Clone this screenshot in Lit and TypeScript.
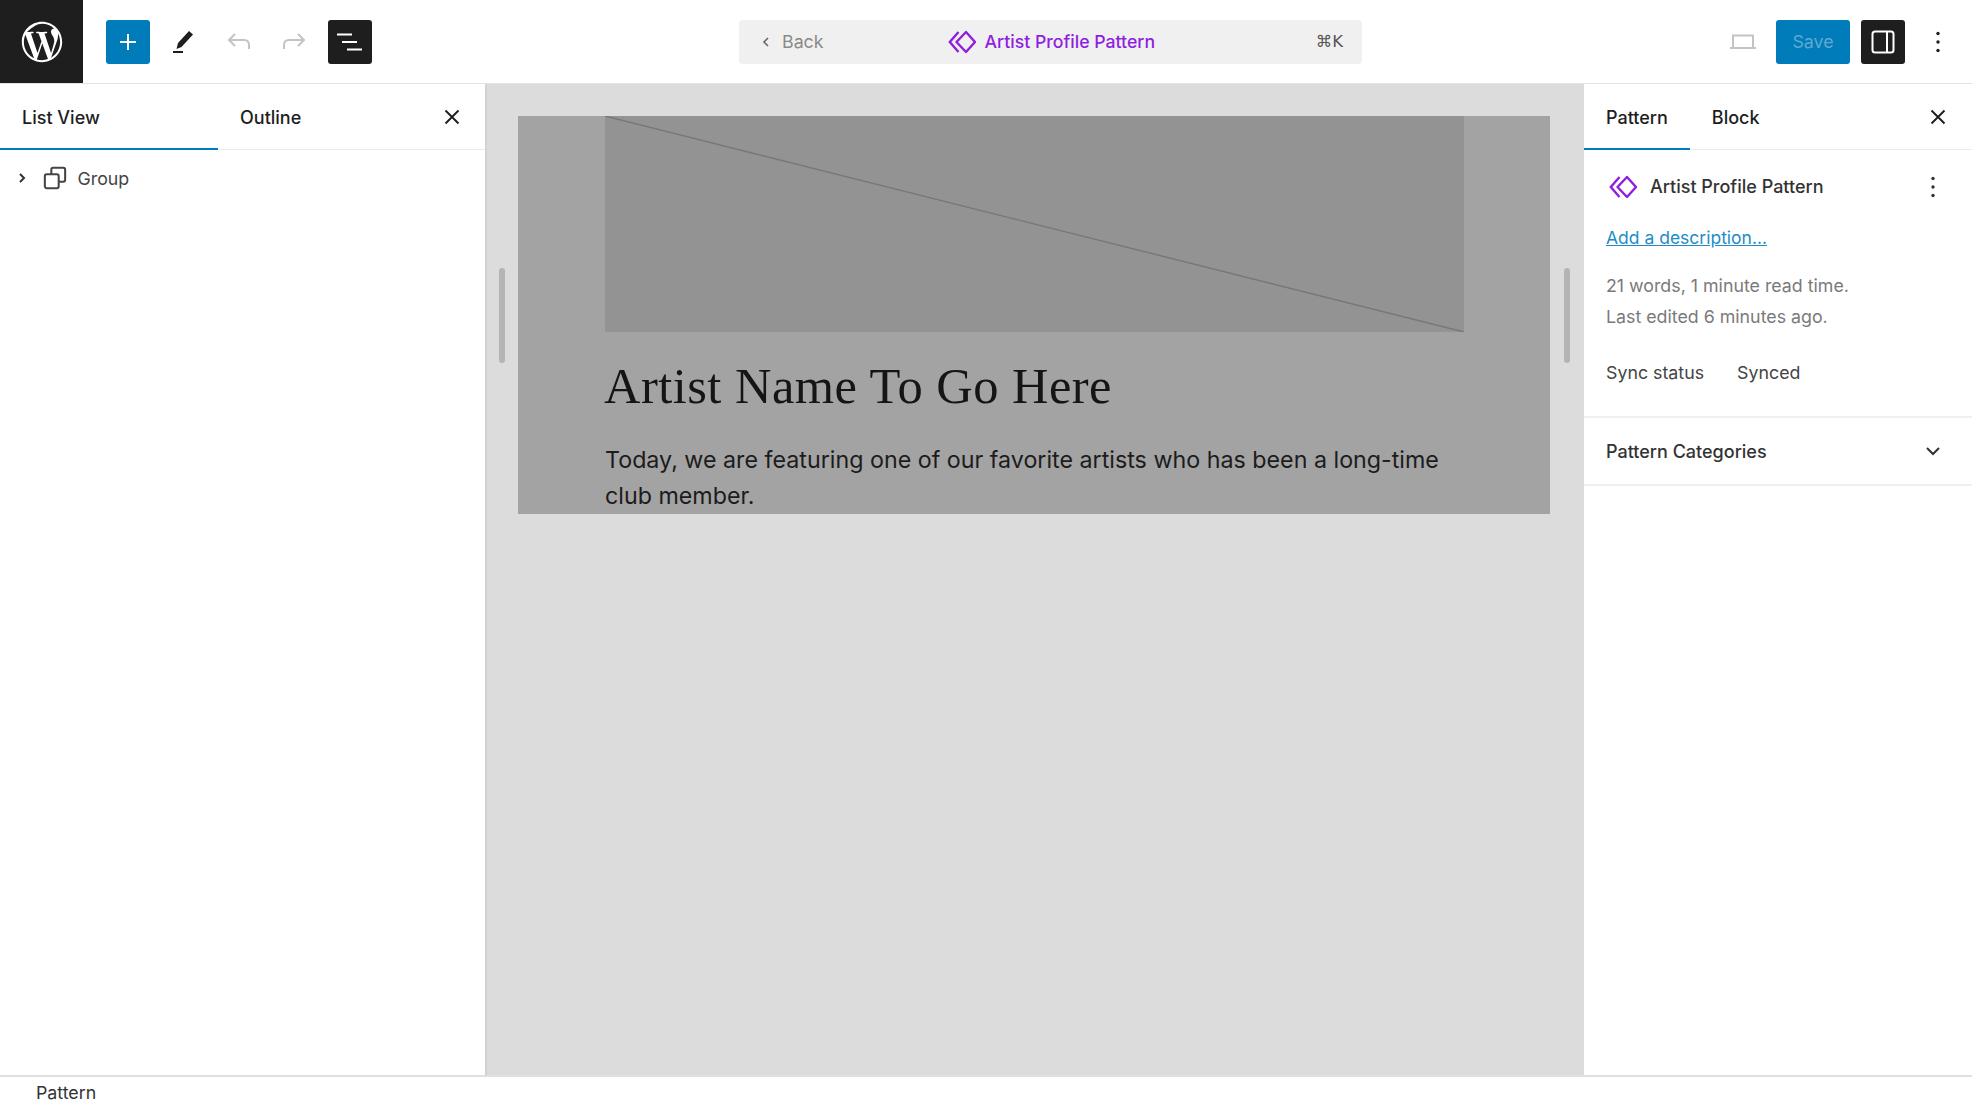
import { LitElement, html, css } from "lit";
import { customElement } from "lit/decorators.js";

const patternIcon = (size: number, color: string) => html`<svg class="pi" width=${size} height=${size} viewBox="0 0 28 28" fill="none" stroke=${color} stroke-width="2.4">
  <path d="M18 4 L8.5 14 L18 24 L27 14 Z" stroke-linejoin="round"/>
  <path d="M10.5 4 L1.8 14 L10.5 24"/>
</svg>`;

const dots = html`<svg width="24" height="24" viewBox="0 0 24 24" fill="currentColor"><circle cx="12" cy="3.5" r="1.7"/><circle cx="12" cy="12" r="1.7"/><circle cx="12" cy="20.5" r="1.7"/></svg>`;
const close = html`<svg width="18" height="18" viewBox="0 0 18 18" fill="none" stroke="currentColor" stroke-width="1.9"><path d="M2.5 2.5 L15.5 15.5 M15.5 2.5 L2.5 15.5"/></svg>`;

@customElement("app-root")
export class AppRoot extends LitElement {
  static styles = css`
    :host { display: block; width: 1972px; height: 1110px; overflow: hidden; background: #fff; font-family: Inter, "Liberation Sans", sans-serif; font-size: 17.8px; color: #1e1e1e; }
    * { box-sizing: border-box; }
    .app { display: grid; grid-template-rows: 84px 1fr 35px; height: 1110px; }
    .top { display: flex; align-items: center; border-bottom: 1px solid #e4e4e4; position: relative; }
    .logo { width: 83px; height: 83px; background: #1e1e1e; display: flex; align-items: center; justify-content: center; flex: none; }
    .tools { display: flex; align-items: center; gap: 11.5px; margin-left: 22.5px; width: 633px; flex: none; }
    .btn { width: 44px; height: 44px; display: flex; align-items: center; justify-content: center; border-radius: 3px; flex: none; color: #1e1e1e; }
    .btn.dark { background: #1e1e1e; color: #fff; }
    .btn.blue { background: #007cba; color: #fff; }
    .muted { color: #c4c4c4; }
    .cmd { width: 623.5px; height: 44px; background: #f0f0f0; border-radius: 4px; display: flex; align-items: center; padding: 0 19px 0 22.5px; flex: none; position: relative; }
    .back { display: flex; align-items: center; color: #8a8a8a; gap: 11px; font-size: 17.8px; }
    .title { position: absolute; left: 209px; top: 0; height: 44px; display: flex; align-items: center; gap: 9px; color: #8f1ee0; font-weight: 500; font-size: 17.7px; }
    .kbd { margin-left: auto; color: #555; font-weight: 500; font-family: "DejaVu Sans", Inter, sans-serif; font-size: 16.5px; }
    .actions { margin-left: auto; display: flex; align-items: center; padding-right: 12px; }
    .save { width: 74px; height: 44px; background: #007cba; color: #5fa8d3; border-radius: 3px; display: flex; align-items: center; justify-content: center; margin-left: 11px; margin-right: 11px; }
    .main { display: grid; grid-template-columns: 487px 1fr 388px; min-height: 0; }
    .left { border-right: 2px solid #d2d2d2; }
    .tabs { display: flex; height: 66px; border-bottom: 1px solid #eaeaea; position: relative; align-items: stretch; }
    .tab { display: flex; align-items: center; font-weight: 500; color: #1e1e1e; border-bottom: 2px solid transparent; margin-bottom: -1px; padding-top: 2px; font-size: 18px; }
    .tab.on { border-bottom-color: #007cba; }
    .left .tab { width: 218px; padding-left: 22px; }
    .left .tab.out { padding-left: 22px; width: auto; }
    .closer { margin-left: auto; display: flex; align-items: center; margin-right: 24px; }
    .tree { display: flex; align-items: center; height: 56px; padding-left: 16px; color: #444; }
    .tree .label { margin-left: 10.5px; }
    .tree .g { margin-left: 15px; display: flex; }
    .canvas { background: #dcdcdc; padding: 32px 34px 0 31px; position: relative; }
    .handle { position: absolute; top: 184px; width: 6px; height: 95px; border-radius: 3px; background: #b4b4b4; }
    .handle.l { left: 12px; }
    .handle.r { right: 14px; }
    .pattern { height: 398px; background: #a3a3a3; padding: 0 86px 0 87px; overflow: hidden; }
    .img { width: 859px; height: 216px; background: #939393; display: block; }
    h1 { margin: 24px 0 0 -1px; font: 400 50.5px/60px "Liberation Serif", serif; color: #151515; letter-spacing: 0.47px; }
    p.body { margin: 26px 0 0; font-size: 23.25px; line-height: 36px; color: #1c1c1c; width: 859px; }
    .right { border-left: 2px solid #d2d2d2; margin-left: -2px; }
    .right .tab { padding: 2px 22px 0; }
    .right .closer { margin-right: 25px; }
    .sec { padding: 0 22px; border-bottom: 2px solid #f0f0f0; height: 268px; }
    .head { display: flex; align-items: center; height: 75px; padding-bottom: 2px; font-weight: 500; color: #333; font-size: 18px; }
    .head .pi { margin-left: 2.5px; }
    .head .name { margin-left: 13.5px; }
    .head .more { margin-left: auto; margin-right: 5px; display: flex; color: #333; }
    .link { color: #1e8cc6; text-decoration: underline; display: block; line-height: 24px; margin-top: 1px; font-size: 17.5px; }
    .meta { color: #7a7a7a; line-height: 31px; margin-top: 20px; }
    .sync { display: flex; gap: 33px; margin-top: 29px; color: #444; line-height: 24px; }
    .acc { display: flex; align-items: center; justify-content: space-between; height: 68px; padding: 0 30px 0 22px; border-bottom: 2px solid #f0f0f0; font-weight: 500; color: #333; font-size: 18px; }
    .foot { border-top: 2px solid #e0e0e0; padding: 0 36px 2px; display: flex; align-items: center; color: #333; }
  `;

  render() {
    return html`<div class="app">
      <header class="top">
        <div class="logo">
          <svg width="44" height="44" viewBox="0 0 24 24" fill="#fff"><path d="M12 1C5.93 1 1 5.93 1 12s4.93 11 11 11 11-4.93 11-11S18.07 1 12 1zM2.11 12c0-1.43.31-2.79.85-4.02l4.72 12.93C4.37 19.31 2.11 15.92 2.11 12zM12 21.89c-.97 0-1.91-.14-2.8-.4l2.97-8.63 3.04 8.34c.02.05.05.09.07.14-1.02.36-2.12.55-3.28.55zm1.36-14.53c.6-.03 1.13-.1 1.13-.1.53-.06.47-.85-.06-.82 0 0-1.6.13-2.63.13-.97 0-2.6-.13-2.6-.13-.53-.03-.6.79-.06.82 0 0 .5.06 1.03.1l1.53 4.2-2.15 6.45-3.58-10.65c.6-.03 1.13-.1 1.13-.1.53-.06.47-.85-.06-.82 0 0-1.6.13-2.63.13-.19 0-.41 0-.64-.01C6.94 3.89 9.3 2.11 12 2.11c2.58 0 4.93.99 6.69 2.6-.04 0-.09-.01-.13-.01-.97 0-1.66.85-1.66 1.76 0 .82.47 1.51.97 2.32.38.66.82 1.51.82 2.73 0 .85-.33 1.83-.75 3.2l-.99 3.3-3.59-10.65zm3.61 13.19l3.02-8.73c.56-1.41.75-2.53.75-3.53 0-.36-.02-.7-.07-1.01.77 1.41 1.21 3.03 1.21 4.75 0 3.64-1.97 6.83-4.91 8.52z"/></svg>
        </div>
        <div class="tools">
          <div class="btn blue"><svg width="24" height="24" viewBox="0 0 24 24" fill="none" stroke="#fff" stroke-width="2"><path d="M12 4 V20 M4 12 H20"/></svg></div>
          <div class="btn"><svg width="26" height="26" viewBox="0 0 26 26" fill="#1e1e1e"><path d="M19 2 L23 5.5 L11.5 18 L6.5 20 L8 14 Z"/><rect x="3" y="22" width="10" height="2"/></svg></div>
          <div class="btn muted"><svg width="26" height="24" viewBox="0 0 26 24" fill="none" stroke="currentColor" stroke-width="2"><path d="M9 4 L3 10 L9 16 M3 10 H18 Q23 10 23 15 V19"/></svg></div>
          <div class="btn muted"><svg width="26" height="24" viewBox="0 0 26 24" fill="none" stroke="currentColor" stroke-width="2"><path d="M17 4 L23 10 L17 16 M23 10 H8 Q3 10 3 15 V19"/></svg></div>
          <div class="btn dark"><svg width="28" height="24" viewBox="0 0 28 24" fill="#fff"><rect x="1" y="3.5" width="15" height="2"/><rect x="6" y="11" width="15" height="2"/><rect x="11" y="18.5" width="15" height="2"/></svg></div>
        </div>
        <div class="cmd">
          <span class="back"><svg width="10" height="14" viewBox="0 0 10 14" fill="none" stroke="#666" stroke-width="1.6"><path d="M7 3 L3 7 L7 11"/></svg><span>Back</span></span>
          <span class="title">${patternIcon(28, "#8f1ee0")}Artist Profile Pattern</span>
          <span class="kbd">⌘K</span>
        </div>
        <div class="actions">
          <div class="btn muted"><svg width="30" height="24" viewBox="0 0 30 24" fill="none" stroke="#c4c4c4" stroke-width="2"><path d="M5 17 V5.5 H25 V17"/><path d="M2 18 H28"/></svg></div>
          <div class="save">Save</div>
          <div class="btn dark"><svg width="26" height="26" viewBox="0 0 26 26" fill="none" stroke="#fff" stroke-width="2"><rect x="2.5" y="2.5" width="21" height="21" rx="2.5"/><path d="M17 3 V23"/></svg></div>
          <div class="btn" style="margin-left: 11px">${dots}</div>
        </div>
      </header>
      <div class="main">
        <aside class="left">
          <div class="tabs">
            <div class="tab on">List View</div>
            <div class="tab out">Outline</div>
            <div class="closer">${close}</div>
          </div>
          <div class="tree">
            <svg width="12" height="14" viewBox="0 0 12 14" fill="none" stroke="#333" stroke-width="2"><path d="M4 3 L8 7 L4 11"/></svg>
            <span class="g"><svg width="24" height="24" viewBox="0 0 26 26" fill="none" stroke="#444" stroke-width="2.2"><rect x="2" y="9" width="15" height="15" rx="2"/><path d="M9 9 V4 Q9 2 11 2 H22 Q24 2 24 4 V15 Q24 17 22 17 H17"/></svg></span>
            <span class="label">Group</span>
          </div>
        </aside>
        <main class="canvas">
          <div class="handle l"></div>
          <div class="pattern">
            <svg class="img" viewBox="0 0 859 216" preserveAspectRatio="none"><line x1="0" y1="0" x2="859" y2="216" stroke="#777" stroke-width="1.4"/></svg>
            <h1>Artist Name To Go Here</h1>
            <p class="body">Today, we are featuring one of our favorite artists who has been a long-time club member.</p>
          </div>
          <div class="handle r"></div>
        </main>
        <aside class="right">
          <div class="tabs">
            <div class="tab on">Pattern</div>
            <div class="tab">Block</div>
            <div class="closer">${close}</div>
          </div>
          <div class="sec">
            <div class="head">${patternIcon(28, "#8f1ee0")}<span class="name">Artist Profile Pattern</span><span class="more">${dots}</span></div>
            <a class="link">Add a description...</a>
            <div class="meta">21 words, 1 minute read time.<br />Last edited 6 minutes ago.</div>
            <div class="sync"><span>Sync status</span><span>Synced</span></div>
          </div>
          <div class="acc"><span>Pattern Categories</span><svg width="18" height="12" viewBox="0 0 18 12" fill="none" stroke="#333" stroke-width="2"><path d="M3 3 L9 9 L15 3"/></svg></div>
        </aside>
      </div>
      <footer class="foot">Pattern</footer>
    </div>`;
  }
}
